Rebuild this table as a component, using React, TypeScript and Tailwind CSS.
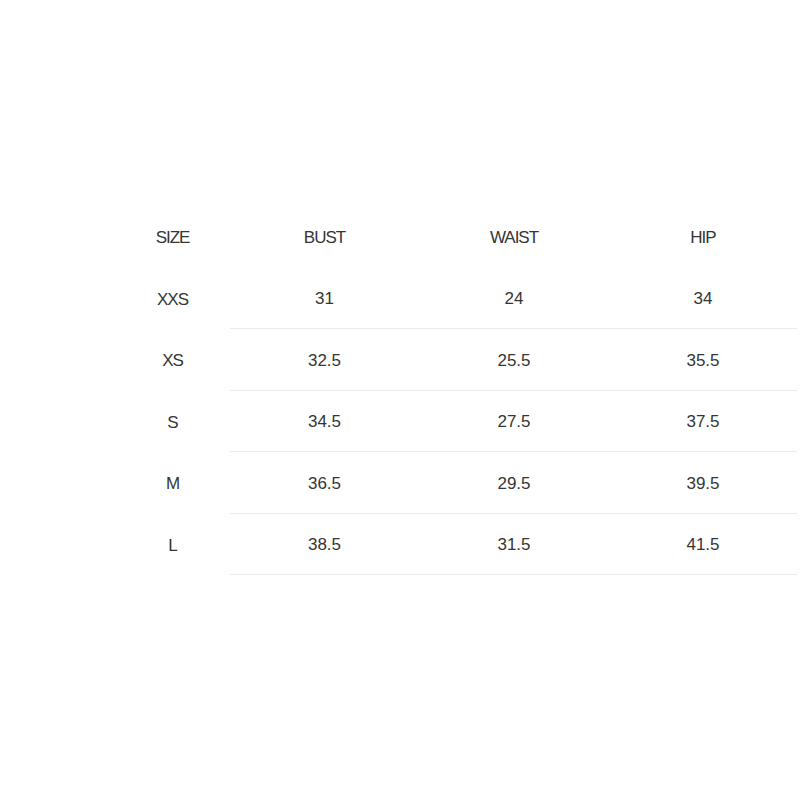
import React from "react";

const rows = [
  ["XXS", "31", "24", "34"],
  ["XS", "32.5", "25.5", "35.5"],
  ["S", "34.5", "27.5", "37.5"],
  ["M", "36.5", "29.5", "39.5"],
  ["L", "38.5", "31.5", "41.5"],
];

export default function App() {
  return (
    <div
      className="w-[800px] h-[800px] bg-white text-[#353535] text-[17px]"
      style={{ fontFamily: '"Liberation Sans", Arial, sans-serif' }}
    >
      <div className="pt-[206px] pl-[115px]">
        <div className="grid grid-cols-[115px_189px_190px_188px] h-[61.5px] items-center text-center pt-[2px] tracking-[-0.06em]">
          <div>SIZE</div>
          <div>BUST</div>
          <div>WAIST</div>
          <div>HIP</div>
        </div>
        {rows.map((r) => (
          <div key={r[0]} className="grid grid-cols-[115px_189px_190px_188px] h-[61.5px] text-center">
            <div className="flex items-center justify-center pt-[2px] tracking-[-0.06em]">{r[0]}</div>
            <div className="flex items-center justify-center pt-[2px] border-b border-[#ebebeb]">{r[1]}</div>
            <div className="flex items-center justify-center pt-[2px] border-b border-[#ebebeb]">{r[2]}</div>
            <div className="flex items-center justify-center pt-[2px] border-b border-[#ebebeb]">{r[3]}</div>
          </div>
        ))}
      </div>
    </div>
  );
}
